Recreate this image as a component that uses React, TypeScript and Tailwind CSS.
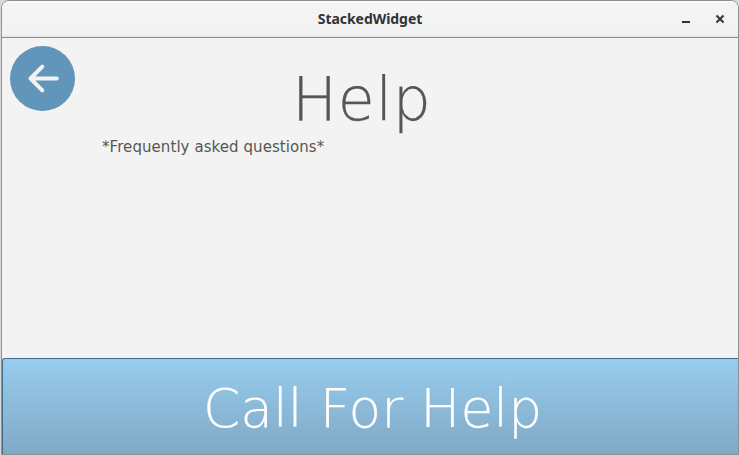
export default function App() {
  return (
    <div className="h-[455px] w-[739px] bg-[#d9d9d9] pl-px">
      <div className="flex h-[455px] w-[738px] flex-col overflow-hidden rounded-t-[8px] border border-[#8f8f8f] bg-[#f3f3f3]">
        <header className="grid h-[37px] shrink-0 grid-cols-[1fr_auto_1fr] items-center border-b border-[#8b8b8b] bg-[linear-gradient(to_bottom,#ffffff_0px,#f4f4f4_2px,#f3f3f3_33px,#e6e6e6_36px)]">
          <span />
          <h1 className="relative -top-px font-['Noto_Sans',sans-serif] text-[14px] font-bold tracking-[-0.05px] text-[#2e3436]">StackedWidget</h1>
          <div className="flex justify-end gap-[24px] pr-[13px]">
            <svg width="10" height="10" viewBox="0 0 10 10"><path d="M1 8h8" stroke="#2e3436" strokeWidth="2" /></svg>
            <svg width="10" height="10" viewBox="0 0 10 10"><path d="M1.5 1.5l7 7m0-7l-7 7" stroke="#2e3436" strokeWidth="2" /></svg>
          </div>
        </header>
        <main className="grid flex-1 grid-cols-[92px_1fr] pl-2 pt-2">
          <button aria-label="Back" className="flex h-[65px] w-[65px] items-center justify-center rounded-full bg-[#6295ba]">
            <svg width="65" height="65" viewBox="0 0 65 65" fill="none" stroke="#f3f3f3" strokeWidth="4" strokeLinecap="round" strokeLinejoin="round"><path d="M32.3 20.7L20.5 32.5l11.8 11.8M20.5 32.5h26.3" /></svg>
          </button>
          <section className="font-['DejaVu_Sans',sans-serif] text-[#555753]">
            <h2 className="ml-[190px] mt-[18px] text-[60px] font-extralight leading-[70px] tracking-[0.7px] [-webkit-text-stroke:0.25px_#555753]">Help</h2>
            <p className="mt-[3px] text-[15px] leading-[20px] tracking-[0.07px]">*Frequently asked questions*</p>
          </section>
        </main>
        <button className="h-[96px] shrink-0 rounded-tl-[3px] border-l border-t border-[#426d8d] bg-gradient-to-b from-[#99ccee] to-[#7fa9c5] pl-[4px] pt-[6px] font-['DejaVu_Sans',sans-serif] text-[53.3px] font-extralight tracking-[0.08px] text-white [-webkit-text-stroke:0.2px_white]">Call For Help</button>
      </div>
    </div>
  );
}
